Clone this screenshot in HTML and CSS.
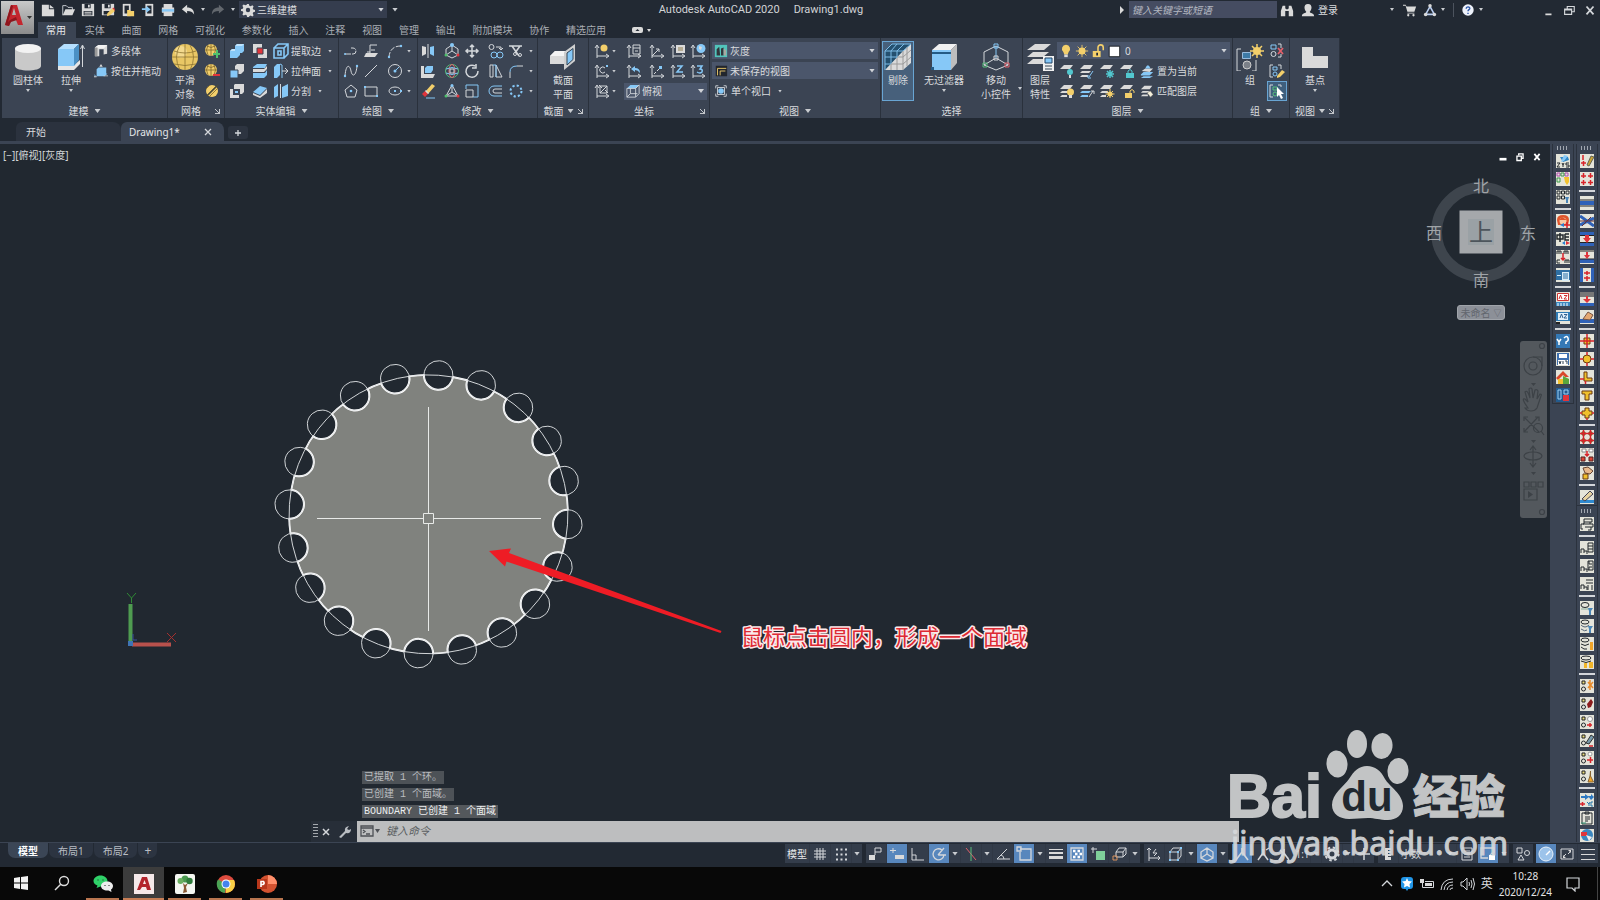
FILE: index.html
```html
<!DOCTYPE html>
<html lang="zh-CN">
<head>
<meta charset="utf-8">
<title>Autodesk AutoCAD 2020 - Drawing1.dwg</title>
<link rel="stylesheet" href="styles.css">
</head>
<body>
<header class="top">
  <button class="app" aria-label="应用程序菜单"><svg viewBox="0 0 32 32" width="32" height="32"><path d="M3 23L9 3h6l6 20h-5l-2-5H9l-2 6zM10 13h4l-2-7z" fill="#c4262e" fill-rule="evenodd"/><path d="M3 23l5-5 6-3 1 3-6 2-2 4zM9 3l2 1-5 16-3 3z" fill="#8e161d"/><path d="M25 14h5l-2.500 3z" fill="#333"/></svg></button>
  <div class="topcol">
    <div class="titlebar">
      <div class="qat">
        <button class="ib"><svg viewBox="0 0 16 16"><path class="w" d="M1 2h8v5h6v8H1zM10 2l5 4h-5z"/></svg></button>
        <button class="ib"><svg viewBox="0 0 16 16"><path class="sw" d="M2 14V3h4l2 2h5v3"/><path class="w" d="M2 14L5 7h11l-3 7z"/></svg></button>
        <button class="ib"><svg viewBox="0 0 16 16"><path class="w" d="M1 1h14v14H1z"/><path class="k" d="M4 1h7v5H4zM3 9h10v5H3z"/><path class="w" d="M8 2h2v3H8zM4 10h8v1H4zM4 12h8v1H4z"/></svg></button>
        <button class="ib"><svg viewBox="0 0 16 16"><path class="w" d="M1 1h14v13H1z"/><path class="k" d="M4 1h7v5H4zM3 9h7v4H3z"/><path class="w" d="M8 2h2v3H8z"/><path class="y" d="M7 12l6-6 3 3-6 5-3 1z"/><path class="r" d="M13 6l1-1 2 2v2z"/></svg></button>
        <button class="ib"><svg viewBox="0 0 16 16"><path class="w" d="M2 1h9v14H2z"/><path class="k" d="M4 3h5v9H4z"/><path class="y" d="M7 8h3l1 1h4v6H7z"/></svg></button>
        <button class="ib"><svg viewBox="0 0 16 16"><path class="w" d="M5 1h9v14H5z"/><path class="k" d="M7 3h5v9H7z"/><path class="b" d="M1 6h5V3l5 4.500L6 11V8H1z"/></svg></button>
        <button class="ib"><svg viewBox="0 0 16 16"><path class="w" d="M3 1h10v4H3zM1 5h14v6H1z"/><path class="b" d="M1 7h14v3H1z"/><path class="w" d="M3 10h10v5H3z"/></svg></button>
        <button class="ib"><svg viewBox="0 0 16 16"><path class="w" d="M1 7l6-5v3c5 0 8 3 8 8-2-3-4-4-8-4v3z"/></svg></button>
        <span class="car"></span>
        <button class="ib dim"><svg viewBox="0 0 16 16"><path class="w" d="M15 7L9 2v3c-5 0-8 3-8 8 2-3 4-4 8-4v3z"/></svg></button>
        <span class="car"></span>
        <div class="drop ws"><svg viewBox="0 0 16 16"><path class="w" fill-rule="evenodd" d="M7 1h2l.5 2 1.500.6 2-1 1.400 1.400-1 2 .6 1.500 2 .5v2l-2 .5-.6 1.500 1 2-1.400 1.400-2-1-1.500.6L9 16H7l-.5-2-1.500-.6-2 1-1.400-1.400 1-2L2 9.500 0 9V7l2-.5L2.600 5l-1-2L3 1.600l2 1L6.500 2zM8 5.500a2.500 2.500 0 100 5 2.500 2.500 0 000-5z"/></svg><select aria-label="工作空间"><option>三维建模</option></select></div>
        <span class="car big"></span>
      </div>
      <div class="title"><span>Autodesk AutoCAD 2020</span><span>Drawing1.dwg</span></div>
      <div class="info">
        <svg class="tri" viewBox="0 0 6 8"><path class="w" d="M1 0l4 4-4 4z"/></svg>
        <input class="search" type="text" placeholder="键入关键字或短语" aria-label="搜索">
        <button class="ib"><svg viewBox="0 0 16 16"><path class="w" d="M3 3h3v3l1 1h2l1-1V3h3l2 6v6h-5V9H6v6H1V9z"/></svg></button>
        <button class="login"><svg viewBox="0 0 16 16"><path class="w" d="M8 1c3 0 4 2 4 4s-1 4-2 5c0 2 5 1 5 5H1c0-4 5-3 5-5C5 9 4 7 4 5s1-4 4-4z"/></svg>登录</button>
        <span class="car far"></span>
        <button class="ib"><svg viewBox="0 0 16 16"><path class="w" d="M0 2h3l1 2h11l-2 6H5L3 3H0zM5 11h8v1H5z"/><circle class="w" cx="6" cy="14" r="1.300"/><circle class="w" cx="12" cy="14" r="1.300"/></svg></button>
        <button class="ib"><svg viewBox="0 0 16 16"><path d="M8 4l5 9H3z" fill="none" stroke="#b9cdf0" stroke-width="1.800"/><circle cx="8" cy="3" r="2" class="w"/><circle cx="3" cy="13" r="2" class="w"/><circle cx="13" cy="13" r="2" class="w"/></svg></button>
        <span class="car"></span><i class="vline"></i>
        <button class="ib"><svg viewBox="0 0 16 16"><circle cx="8" cy="8" r="6.500" fill="#eef2fb"/><path d="M6 6.500c0-3 4.500-2.500 4 0-.3 1.200-2 1.200-2 3M8 11v1.500" fill="none" stroke="#2c56a8" stroke-width="1.600"/></svg></button>
        <span class="car"></span>
        <div class="win">
          <button class="ib" aria-label="最小化"><svg viewBox="0 0 16 16"><path class="w" d="M5 12h7v2H5z"/></svg></button>
          <button class="ib" aria-label="还原"><svg viewBox="0 0 16 16"><path class="sw" stroke-width="1.300" d="M3 7h8v6H3zM6 7V4h8v6h-3M3 8h8"/></svg></button>
          <button class="ib" aria-label="关闭"><svg viewBox="0 0 16 16"><path class="sw" stroke-width="2" d="M4 4l8 9M12 4l-8 9"/></svg></button>
        </div>
      </div>
    </div>
    <div class="tabrow">
      <nav class="tabs">
        <a class="on" href="#">常用</a><a href="#">实体</a><a href="#">曲面</a><a href="#">网格</a><a href="#">可视化</a><a href="#">参数化</a><a href="#">插入</a><a href="#">注释</a><a href="#">视图</a><a href="#">管理</a><a href="#">输出</a><a href="#">附加模块</a><a href="#">协作</a><a href="#">精选应用</a>
      </nav>
      <button class="mini"><svg viewBox="0 0 20 8" width="20" height="8"><rect class="w" y="1" width="11" height="6" rx="2"/><path class="k" d="M3.500 5h4l-2-2z"/><path class="w" d="M15 3h4l-2 3z"/></svg></button>
    </div>
  </div>
</header>

<div class="ribbon">
  <section class="panel p1">
    <div class="body">
      <button class="bigb w44"><svg viewBox="0 0 28 28"><path fill="#c9c9c9" d="M1 5v18c0 6 26 6 26 0V5z"/><ellipse cx="14" cy="5.500" rx="13" ry="4.500" fill="#f2f2f2"/></svg><span>圆柱体</span><i class="car"></i></button>
      <button class="bigb w42"><svg viewBox="0 0 28 28"><path fill="#e6e6e6" d="M1 22h16l6-5v4l-6 6H1z"/><path class="b" d="M1 6h16v17H1z"/><path fill="#b5e0ff" d="M1 6l6-5h15l-5 5z"/><path fill="#4a90c4" d="M17 6l5-5v16l-5 6z"/><path class="sw" d="M25.500 24V3M23.500 6l2-4 2 4"/></svg><span>拉伸</span><i class="car"></i></button>
      <div class="stack">
        <button class="tb"><svg viewBox="0 0 16 16"><path class="w" d="M1 4l4-3h10v10l-4 1V6H6v8H1z"/><path fill="#f2f2f2" d="M1 4l4-3h10l-4 4H5z"/><path fill="#999" d="M1 4h3v10H1z"/></svg>多段体</button>
        <button class="tb"><svg viewBox="0 0 16 16"><path class="b" d="M3 6h9v8H3zM3 6l2-2h9l-2 2zM12 6l2-2v8l-2 2z"/><path class="w" d="M0 14h3v1H0zM11 13h5v1h-5zM8 0l2 3H6z"/><path class="sb" d="M2 14l-2-2M12 13l3-2"/></svg>按住并拖动</button>
      </div>
    </div>
    <footer>建模<i class="car big"></i></footer>
  </section>

  <section class="panel p2">
    <div class="body">
      <button class="bigb w34"><svg viewBox="0 0 28 28"><circle cx="14" cy="14" r="13" fill="#e9c765"/><circle cx="10" cy="9" r="6" fill="#f7e3a0" opacity=".7"/><path d="M1 14h26M14 1v26M3 8q11 4 22 0M9 2q-7 12 0 25M19 2q7 12 0 25M3 21q11 3 22 0" fill="none" stroke="#8d7430" stroke-width=".8"/></svg><span>平滑<br>对象</span></button>
      <div class="stack">
        <button class="ib"><svg viewBox="0 0 16 16"><circle class="y" cx="7" cy="7" r="6"/><path class="sk" d="M1 7h12M7 1v12M3 3q4 3 8 0M4 2q-3 5 0 10M10 2q3 5 0 10"/><path class="g" d="M9 10h3V7h2v3h2v2h-2v3h-2v-3H9z"/></svg></button>
        <button class="ib"><svg viewBox="0 0 16 16"><circle class="y" cx="7" cy="7" r="6"/><path class="sk" d="M1 7h12M7 1v12M3 3q4 3 8 0M4 2q-3 5 0 10M10 2q3 5 0 10"/><path class="r" d="M9 11h7v2H9z"/></svg></button>
        <button class="ib"><svg viewBox="0 0 16 16"><circle class="y" cx="8" cy="8" r="6"/><path class="sk" d="M3 12l9-9M5 14l9-9M2 6l4-4"/><path d="M14 2L3 13" stroke="#4a4a3a" stroke-width="1.500"/></svg></button>
      </div>
    </div>
    <footer>网格<i class="corner"></i></footer>
  </section>

  <section class="panel p3">
    <div class="body grid g3">
      <button class="ib"><svg viewBox="0 0 16 16"><path class="b" d="M6 3l2-2h7v7l-2 2h-2v2l-3 3H1V8l2-2h3z"/><path fill="#bfe3fd" d="M6 3l2-2h7l-2 2zM1 8l2-2h3v2z"/></svg></button>
      <button class="ib"><svg viewBox="0 0 16 16"><path class="w" d="M1 1h9v9H1zM6 6h9v9H6z"/><path class="r" stroke="#3b4453" d="M5 5h6v6H5z"/></svg></button>
      <button class="ib"><svg viewBox="0 0 16 16"><path class="sb" stroke-width="1.600" d="M1 5h10v10H1zM1 5l4-4h10v10l-4 4M11 5l4-4M5 8h3v4H5z"/></svg></button>
      <button class="tt">提取边<i class="car"></i></button>
      <button class="ib"><svg viewBox="0 0 16 16"><path class="w" d="M6 3l2-2h7v7l-3 3H6z"/><path class="b" stroke="#3b4453" d="M1 7h8v8H1z"/></svg></button>
      <button class="ib"><svg viewBox="0 0 16 16"><path class="b" d="M1 4l4-3h10l-2 4H1zM1 10h12l2-3v5l-3 3H1z"/><path class="w" d="M1 6h11l3-3v3l-3 3H1z"/></svg></button>
      <button class="ib"><svg viewBox="0 0 16 16"><path class="b" d="M1 4l3-3h3v11l-3 3H1z"/><path class="sb" d="M9 2v13M7 1l2 1"/><path class="sw" d="M9 8h6M12 5l3 3-3 3"/></svg></button>
      <button class="tt">拉伸面<i class="car"></i></button>
      <button class="ib"><svg viewBox="0 0 16 16"><path class="w" d="M5 2l1-1h9v8l-2 2H5zM1 6h9v9H1z"/><path class="b" stroke="#3b4453" stroke-width="2" d="M5 7h5v4H5z"/></svg></button>
      <button class="ib"><svg viewBox="0 0 16 16"><path class="b" d="M1 9l7-6 7 2-7 7z"/><path class="w" d="M1 10l7 3 7-7v4l-7 5-7-3z"/></svg></button>
      <button class="ib"><svg viewBox="0 0 16 16"><path class="b" d="M1 4l4-3v12l-4 2zM9 4l6-3v12l-6 2z"/><path class="sw" d="M7.500 1v14"/></svg></button>
      <button class="tt">分割<i class="car"></i></button>
    </div>
    <footer>实体编辑<i class="car big"></i></footer>
  </section>

  <section class="panel p4">
    <div class="body grid g4">
      <button class="ib"><svg viewBox="0 0 16 16"><path class="sw" d="M2 11h8a3 3 0 000-6H8" stroke-dasharray="6 1"/><circle class="b" cx="2" cy="11" r="1"/></svg></button>
      <button class="ib"><svg viewBox="0 0 16 16"><path class="sw" d="M4 9h3M7 10V2h7M8 7h4"/><path class="w" d="M3 10h12l-3 4H1z"/></svg></button>
      <button class="ib"><svg viewBox="0 0 16 16"><path class="sw" stroke-dasharray="5 1.500" d="M2 14Q3 3 14 3"/><circle class="b" cx="2" cy="14" r="1.200"/><circle class="b" cx="14" cy="3" r="1.200"/></svg></button><i class="car"></i>
      <button class="ib"><svg viewBox="0 0 16 16"><path class="sw" d="M2 13C3 0 7 2 8 8s5 6 6-5"/><circle class="b" cx="2" cy="13" r="1.200"/><circle class="b" cx="14" cy="3" r="1.200"/></svg></button>
      <button class="ib"><svg viewBox="0 0 16 16"><path class="sw" d="M2 14L14 2"/></svg></button>
      <button class="ib"><svg viewBox="0 0 16 16"><circle class="sw" cx="8" cy="8" r="6.500"/><path class="sb" d="M8 8l4-4"/><circle class="b" cx="8" cy="8" r="1.500"/></svg></button><i class="car"></i>
      <button class="ib"><svg viewBox="0 0 16 16"><path class="sw" d="M8 2l6 5-2 7H4L2 7z"/><circle class="b" cx="8" cy="8" r="1.300"/></svg></button>
      <button class="ib"><svg viewBox="0 0 16 16"><path class="sw" d="M2 4h12v9H2z"/><path class="b" d="M1 3h2v2H1zM13 12h2v2h-2z"/></svg></button>
      <button class="ib"><svg viewBox="0 0 16 16"><ellipse class="sw" cx="8" cy="8" rx="6" ry="4"/><path class="b" d="M7 7h2v2H7zM13 7h2v2h-2z"/></svg></button><i class="car"></i>
    </div>
    <footer>绘图<i class="car big"></i></footer>
  </section>

  <section class="panel p5">
    <div class="body grid g5">
      <button class="ib"><svg viewBox="0 0 16 16"><path class="w" d="M2 3l4 1v7l-4 2z"/><path class="b" d="M14 3l-4 1v7l4 2z"/><path class="sw" d="M8 1v14"/></svg></button>
      <button class="ib"><svg viewBox="0 0 16 16"><path class="sw" d="M8 2l6 4v6l-6 3-6-3V6zM8 8v-6M8 8l6 4M8 8l-6 4"/><circle class="b" cx="8" cy="2" r="2"/><circle class="r" cx="14" cy="12" r="1.500"/><circle class="g" cx="2" cy="12" r="1.500"/></svg></button>
      <button class="ib"><svg viewBox="0 0 16 16"><path class="sw" stroke-width="1.500" d="M8 2v12M2 8h12M6 4l2-2 2 2M6 12l2 2 2-2M4 6L2 8l2 2M12 6l2 2-2 2"/></svg></button>
      <button class="ib"><svg viewBox="0 0 16 16"><circle class="sw" cx="3.500" cy="4" r="2.500"/><path class="sw" d="M8 4h5v3M11 5l2 2 2-2"/><circle class="sb" cx="6" cy="12" r="3"/><circle class="sb" cx="12" cy="12" r="3"/></svg></button>
      <button class="ib"><svg viewBox="0 0 16 16"><path class="sw" stroke-width="1.500" d="M1 3h13M4 3l7 10M12 3L7 10"/><circle class="sw" cx="12" cy="12" r="1.500"/><circle class="sw" cx="7" cy="11" r="1.500"/></svg></button><i class="car"></i>
      <button class="ib"><svg viewBox="0 0 16 16"><path class="w" d="M1 3h3v8h11l-2 4H1z"/><path class="b" d="M5 5l2-2h6v4l-2 3H5z"/></svg></button>
      <button class="ib"><svg viewBox="0 0 16 16"><circle class="sg" cx="8" cy="8" r="6.500"/><ellipse class="sr" cx="8" cy="8" rx="3" ry="6.500"/><path class="sb" d="M2 6q6-3 12 0M2 10q6 3 12 0"/><path class="sw" d="M6 6h4v4H6z"/></svg></button>
      <button class="ib"><svg viewBox="0 0 16 16"><path class="sw" stroke-width="1.500" d="M11 3a6 6 0 103 5M12 1v4H8"/></svg></button>
      <button class="ib"><svg viewBox="0 0 16 16"><path class="sw" d="M5 14H2V2h3v12M8 14V2l6 12z"/><path class="sb" d="M5 2h3v12"/></svg></button>
      <button class="ib"><svg viewBox="0 0 16 16"><path class="sw" d="M2 15V9M9 3h6"/><path class="sb" d="M2 9q0-6 7-6"/></svg></button><i class="car"></i>
      <button class="ib"><svg viewBox="0 0 16 16"><path class="y" d="M5 9l7-8 3 2-7 8z"/><path class="r" d="M2 11l3-3 3 3-3 3z"/><path class="w" d="M5 8l1-1 3 3-1 1z"/><path class="sb" d="M6 15h9"/></svg></button>
      <button class="ib"><svg viewBox="0 0 16 16"><path class="sw" d="M8 2l6 11H2zM8 2v7l6 4M8 9l-6 4"/><circle class="b" cx="8" cy="2.500" r="1.500"/><circle class="r" cx="14" cy="13" r="1.500"/><circle class="g" cx="2" cy="13" r="1.500"/></svg></button>
      <button class="ib"><svg viewBox="0 0 16 16"><path class="sb" d="M2 6V2h12v12h-5"/><path class="sw" d="M2 7h7v7H2z"/></svg></button>
      <button class="ib"><svg viewBox="0 0 16 16"><path class="sb" d="M14 3H6a5 5 0 000 10h8"/><path class="sw" d="M14 6H7a2 2 0 000 4h7"/></svg></button>
      <button class="ib"><svg viewBox="0 0 16 16"><circle cx="8" cy="8" r="5.500" fill="none" stroke="#86c8f7" stroke-width="2" stroke-dasharray="2.200 2.120"/></svg></button><i class="car"></i>
    </div>
    <footer>修改<i class="car big"></i></footer>
  </section>

  <section class="panel p6">
    <div class="body">
      <button class="bigb w50"><svg viewBox="0 0 28 28"><path class="w" d="M1 13l5-5h14l-4 5v8H1z"/><path fill="#f4f4f4" d="M1 13l5-5h14l-5 5z"/><path fill="#cfcfcf" d="M15 9l11-8v17l-11 9z"/><path class="b" stroke="#345" d="M18 10l6-4.500v11L18 22z"/></svg><span>截面<br>平面</span></button>
    </div>
    <footer>截面<i class="car big"></i><i class="corner"></i></footer>
  </section>

  <section class="panel p7">
    <div class="body grid g7">
      <button class="ib"><svg viewBox="0 0 16 16"><path class="sw" d="M3 15V3M1 5l2-3 2 3M3 13h11M12 11l3 2-3 2"/><circle class="y" cx="10" cy="5" r="3.500"/></svg></button><i class="car"></i>
      <button class="ib"><svg viewBox="0 0 16 16"><path class="sw" d="M3 15V3M1 5l2-3 2 3M3 13h11M12 11l3 2-3 2M7 2h7v9H7zM7 5h7M9 8h3"/></svg></button>
      <button class="ib"><svg viewBox="0 0 16 16"><path class="sw" d="M3 15V3M1 5l2-3 2 3M3 13h11M12 11l3 2-3 2M3 13l7-7M7 6h3v3"/></svg></button>
      <button class="ib"><svg viewBox="0 0 16 16"><path class="sw" d="M3 15V3M1 5l2-3 2 3M3 13h11M12 11l3 2-3 2"/><path class="w" d="M6 2h9v8H6z"/><path class="sk" d="M8 5h5M8 7h5"/></svg></button>
      <button class="ib"><svg viewBox="0 0 16 16"><path class="sw" d="M3 15V3M1 5l2-3 2 3M3 13h11M12 11l3 2-3 2"/><circle class="b" cx="11" cy="5.500" r="4.500"/><path class="w" d="M9 3l3 1-1 3-2-1z"/></svg></button>
      <button class="ib"><svg viewBox="0 0 16 16"><path class="sw" d="M3 15V3M1 5l2-3 2 3M3 13h11M12 11l3 2-3 2M11 5a3 3 0 100 4"/><path class="sb" d="M12 2l2 2M14 2l-2 2"/></svg></button><i class="car"></i>
      <button class="ib"><svg viewBox="0 0 16 16"><path class="sw" d="M3 15V3M1 5l2-3 2 3M3 13h11M12 11l3 2-3 2"/><path class="b" d="M5 6l4-3v2q5 0 5 5-2-3-5-3v2z"/></svg></button>
      <button class="ib"><svg viewBox="0 0 16 16"><path class="sw" d="M3 15V3M1 5l2-3 2 3M3 13h11M12 11l3 2-3 2M5 11l2-2M8 8l2-2"/><path class="b" d="M10 3h3v3h-3z"/></svg></button>
      <button class="ib"><svg viewBox="0 0 16 16"><path class="sw" d="M3 15V3M1 5l2-3 2 3M3 13h11M12 11l3 2-3 2"/><path class="sb" stroke-width="1.500" d="M7 3h5L7 9h6"/></svg></button>
      <button class="ib"><svg viewBox="0 0 16 16"><path class="sw" d="M3 15V3M1 5l2-3 2 3M3 13h11M12 11l3 2-3 2"/><path class="sb" stroke-width="1.500" d="M7 3h5L10 6q3 0 2 3-2 2-5 0"/></svg></button>
      <button class="ib"><svg viewBox="0 0 16 16"><path class="sw" d="M3 15V3M1 5l2-3 2 3M3 13h11M12 11l3 2-3 2M6 3h7v7H6zM6 10l7-7M5 2l3 3M14 10l-3-3"/></svg></button><i class="car"></i>
      <div class="drop span4"><svg viewBox="0 0 16 16"><path class="b" d="M1 5l4-4h10l-4 4z"/><path class="sw" d="M1 5h10v10H1zM11 5l4-4v10l-4 4M5 5v6l-4 4M5 11h8"/></svg><select aria-label="视图方向"><option>俯视</option></select></div>
    </div>
    <footer>坐标<i class="corner"></i></footer>
  </section>

  <section class="panel p8">
    <div class="body stack wide">
      <div class="drop"><svg viewBox="0 0 16 16"><path fill="#51c4bb" d="M1 1h14v14H1z"/><path fill="#32363c" d="M3 6l3-3 1 10H3zM8 5l3-1v9H8z"/><path fill="#a8a8a0" d="M11 5l3 2v6h-3z"/></svg><select aria-label="视觉样式"><option>灰度</option></select></div>
      <div class="drop"><svg viewBox="0 0 16 16"><path fill="#22262d" d="M2 2h13v12H2z"/><path class="sy" d="M4 13V5h10M7 13V8h6"/></svg><select aria-label="视图"><option>未保存的视图</option></select></div>
      <button class="tb"><svg viewBox="0 0 16 16"><path class="sw" d="M2 5V2h3M11 2h3v3M14 11v3h-3M5 14H2v-3M4 4h8v8H4z"/><circle class="b" cx="8" cy="8" r="3.200"/></svg>单个视口<i class="car"></i></button>
    </div>
    <footer>视图<i class="car big"></i></footer>
  </section>

  <section class="panel p9">
    <div class="body">
      <button class="bigb sel w32"><svg viewBox="0 0 28 28"><path fill="#24506f" d="M1 8l7-7h19v19l-8 7H1z"/><path class="w" d="M1 27L19 8v19zM19 8l8-7v19l-8 7z"/><path fill="none" stroke="#7dbbe6" d="M1 27V8h18M1 8l7-7h19l-8 7M7 8l6-7M13 8l7-7M7 8v13M13 8v7M1 14h12M1 21h6"/><path fill="none" stroke="#9a9a9a" d="M13 15v12M7 21v6M13 14h6l8-7M7 21h12l8-7M23 4v19M19 8v19"/></svg><span>剔除</span></button>
      <button class="bigb w60"><svg viewBox="0 0 28 28"><path fill="#f1f1f1" d="M2 7l7-6h18l-6 6z"/><path fill="#bdbdbd" d="M21 7l6-6v19l-6 7z"/><path class="b" d="M2 7h19v20H2z"/><path fill="#245b85" d="M2 9h19v2H2zM1 24h3v3H1z"/></svg><span>无过滤器</span><i class="car"></i></button>
      <button class="bigb w44"><svg viewBox="0 0 28 28"><path class="sw" d="M14 3l12 6v13l-12 5-12-5V9zM14 15l12 7M14 15L2 22"/><path class="sb" d="M14 3v12M12 1h4v4h-4z"/><path class="sg" d="M1 20h4v4H1z"/><path class="sr" d="M23 20h4v4h-4z"/><path class="sw" d="M12 13h4v4h-4z"/></svg><span>移动<br>小控件</span></button><i class="car low"></i>
    </div>
    <footer>选择</footer>
  </section>

  <section class="panel p10">
    <div class="body">
      <button class="bigb w34"><svg viewBox="0 0 28 28"><path class="w" d="M1 7l8-6h16l-7 6zM1 14l6-5h16l-6 5zM1 21l6-5h10v5z"/><path fill="#f1f1f1" d="M17 13h11v15H17z"/><path class="b" stroke="#246" d="M19 15h7v5h-7z"/><path stroke="#345" d="M19 23h7M19 26h7"/></svg><span>图层<br>特性</span></button>
      <div class="stack wide">
        <div class="drop lay"><svg viewBox="0 0 16 16"><path class="y" d="M8 1a4.500 4.500 0 013 8l-1 3H6l-1-3a4.500 4.500 0 013-8z"/><path class="w" d="M6 12h4v3H6z"/></svg><svg viewBox="0 0 16 16"><circle class="y" cx="8" cy="8" r="4"/><path class="sy" d="M8 1v14M1 8h14M3 3l10 10M13 3L3 13"/></svg><svg viewBox="0 0 16 16"><path class="y" d="M2 8h9v7H2z"/><path class="sy" stroke-width="1.800" d="M8 8V4a3 3 0 016 0v3"/><path class="k" d="M6 10h2v3H6z"/></svg><svg viewBox="0 0 16 16"><path fill="#fff" stroke="#14181d" d="M2.500 2.500h12v12h-12z"/></svg><select aria-label="图层"><option>0</option></select></div>
        <div class="row">
          <button class="ib"><svg viewBox="0 0 16 16"><path class="w" d="M1 6l4-4h9l-3 4z"/><circle cx="11" cy="9" r="3" fill="#52c7cf"/><path class="w" d="M10 12h2v3h-2z"/></svg></button>
          <button class="ib"><svg viewBox="0 0 16 16"><path class="w" d="M1 6l4-4h9l-3 4zM1 10l2-2h9l-2 2zM1 14l2-2h6v2z"/><path class="sb" d="M14 8l-4 6M9 12v3h3"/></svg></button>
          <button class="ib"><svg viewBox="0 0 16 16"><path class="w" d="M1 6l4-4h9l-3 4z"/><path d="M11 7v8M7 11h8M8 8l6 6M14 8l-6 6" stroke="#52c7cf" stroke-width="1.500"/></svg></button>
          <button class="ib"><svg viewBox="0 0 16 16"><path class="w" d="M1 6l4-4h9l-3 4z"/><path d="M7 10h8v5H7z" fill="#52c7cf"/><path d="M9 10V8q2-3 4 0v2" fill="none" stroke="#52c7cf"/></svg></button>
          <button class="tb n"><svg viewBox="0 0 16 16"><path class="b" d="M1 12l3-3h11l-4 4H1zM1 16l3-2h11l-4 2z"/><path class="w" d="M2 8l4-3h9l-4 4z"/><path class="b" d="M6 5q3-7 6 0z"/></svg>置为当前</button>
        </div>
        <div class="row">
          <button class="ib"><svg viewBox="0 0 16 16"><path class="w" d="M1 6l4-4h9l-3 4zM1 10l2-2h6v2zM1 14l2-2h5v2z"/><circle cx="11.500" cy="9" r="3.500" class="y"/><path class="w" d="M10 12h3v3h-3z"/></svg></button>
          <button class="ib"><svg viewBox="0 0 16 16"><path class="w" d="M1 6l4-4h9l-3 4z"/><path class="b" d="M1 10l2-2h9l-2 2zM1 14l2-2h6v2z"/><path class="sw" d="M14 8l-4 6M12 8h3v3"/></svg></button>
          <button class="ib"><svg viewBox="0 0 16 16"><path class="w" d="M1 6l4-4h9l-3 4zM1 10l2-2h6v2zM1 14l2-2h4v2z"/><path class="sy" d="M11 6v9M6.500 11h9M8 8l6 6M14 8l-6 6"/><circle class="y" cx="11" cy="11" r="2.500"/></svg></button>
          <button class="ib"><svg viewBox="0 0 16 16"><path class="w" d="M1 6l4-4h9l-3 4z"/><path class="y" d="M6 10h7v5H6z"/><path class="sy" d="M11 10V8q2-3 4 0v2"/></svg></button>
          <button class="tb n"><svg viewBox="0 0 16 16"><path class="w" d="M1 6l4-4h9l-3 4zM1 10l2-2h9l-2 2zM1 14l2-2h6v2z"/><path fill="#f5f0dc" stroke="#555" stroke-width=".5" d="M8 10l4-2 3 4-3 3z"/></svg>匹配图层</button>
        </div>
      </div>
    </div>
    <footer>图层<i class="car big"></i></footer>
  </section>

  <section class="panel p11">
    <div class="body">
      <button class="bigb w34"><svg viewBox="0 0 28 28"><path class="sw" d="M5 6H1v22h4M16 28h4V17"/><path fill="#3e7aa6" stroke="#9bd" d="M6.500 9.500h8v6h-8z"/><circle cx="11" cy="22" r="4" fill="#7b8088" stroke="#ccc"/><path d="M21 1v14M14 8h14M16 3l10 10M26 3L16 13" stroke="#f3cf6b" stroke-width="1.500"/><circle class="y" cx="21" cy="8" r="4"/></svg><span>组</span></button>
      <div class="stack">
        <button class="ib"><svg viewBox="0 0 16 16"><path class="sb" d="M2 2h5v4H2z"/><circle class="sw" cx="4.500" cy="11" r="2.500"/><path class="sw" d="M9 1h3v4M9 14h3v-3"/><path class="sr" stroke-width="1.800" d="M9 5l5 6M14 5l-5 6"/></svg></button>
        <button class="ib"><svg viewBox="0 0 16 16"><path class="sw" d="M4 2H1v12h3M9 2h3v4"/><path class="sb" d="M4 4h4v3H4z"/><circle class="sb" cx="6" cy="11" r="2"/><path class="y" d="M8 13l5-6 3 2-5 5-3 1z"/></svg></button>
        <button class="ib on"><svg viewBox="0 0 16 16"><path class="sw" d="M4 2H1v12h3M9 2h3v2"/><path class="sg" d="M4 4h4v3H4z"/><circle class="sg" cx="6" cy="11" r="2"/><path fill="#fff" d="M8 4l7 7h-3l2 4-2 1-2-4-2 2z"/></svg></button>
      </div>
    </div>
    <footer>组<i class="car big"></i></footer>
  </section>

  <section class="panel p12">
    <div class="body">
      <button class="bigb w50"><svg viewBox="0 0 28 28"><path class="w" d="M1 4h11v9h15v12H1z"/></svg><span>基点</span><i class="car"></i></button>
    </div>
    <footer>视图<i class="car big"></i><i class="corner"></i></footer>
  </section>
</div>

<div class="files">
  <button class="ftab">开始</button>
  <button class="ftab on"><span>Drawing1*</span><svg viewBox="0 0 8 8" width="8" height="8"><path class="sw" stroke-width="1.300" d="M1 1l6 6M7 1L1 7"/></svg></button>
  <button class="fplus" aria-label="新图形"><svg viewBox="0 0 8 8" width="8" height="8"><path class="sw" stroke-width="1.300" d="M4 1v6M1 4h6"/></svg></button>
</div>

<div class="work">
  <main class="canvas">
    <div class="vlabel">[−][俯视][灰度]</div>
    <svg class="drawing" width="1100" height="640" viewBox="0 0 1100 640">
      <defs>
        <clipPath id="disc"><circle r="140"/></clipPath>
        <g id="ring">
          <circle cx="0" cy="-139.400" r="14.500"/><circle cx="43.100" cy="-132.600" r="14.500"/><circle cx="81.900" cy="-112.800" r="14.500"/><circle cx="112.800" cy="-81.900" r="14.500"/><circle cx="132.600" cy="-43.100" r="14.500"/>
          <circle cx="139.400" cy="0" r="14.500"/><circle cx="132.600" cy="43.100" r="14.500"/><circle cx="112.800" cy="81.900" r="14.500"/><circle cx="81.900" cy="112.800" r="14.500"/><circle cx="43.100" cy="132.600" r="14.500"/>
          <circle cx="0" cy="139.400" r="14.500"/><circle cx="-43.100" cy="132.600" r="14.500"/><circle cx="-81.900" cy="112.800" r="14.500"/><circle cx="-112.800" cy="81.900" r="14.500"/><circle cx="-132.600" cy="43.100" r="14.500"/>
          <circle cx="-139.400" cy="0" r="14.500"/><circle cx="-132.600" cy="-43.100" r="14.500"/><circle cx="-112.800" cy="-81.900" r="14.500"/><circle cx="-81.900" cy="-112.800" r="14.500"/><circle cx="-43.100" cy="-132.600" r="14.500"/>
        </g>
      </defs>
      <g transform="translate(428.500 370.300) rotate(4.100)">
        <circle r="139.400" fill="#80827e" stroke="#fff" stroke-width="1.800"/>
        <use href="#ring" fill="#212830" stroke="none"/>
        <g clip-path="url(#disc)"><use href="#ring" fill="#212830" stroke="#fff" stroke-width="2"/></g>
        <circle r="139.400" fill="none" stroke="#dfe2e4" stroke-width=".9"/>
        <use href="#ring" fill="none" stroke="#dfe2e4" stroke-width=".9"/>
      </g>
      <path d="M428.500 263v106M428.500 380v107M317 374.500h106M434 374.500h107M423.500 369.500h10v10h-10z" fill="none" stroke="#e8eae8"/>
      <path d="M489 407l22-2.500-2 4.500 212.500 78-1 2-214-71.500-1.500 5z" fill="#ee1c25"/>
      <text class="note" x="741" y="501">鼠标点击圆内，形成一个面域</text>
      <path d="M128.500 460h4v41h-4z" fill="#4f9c50"/><path d="M132 498.500h39v4h-39z" fill="#b8514c"/>
      <path d="M127 449l4.500 5 4.500-5M131.500 454v5" fill="none" stroke="#2f8a35"/><path d="M167 489l9 9M176 489l-9 9" fill="none" stroke="#a5302f"/><path d="M128 497h5v5h-5z" fill="#3f74b5"/><path d="M133 490v6h4" fill="none" stroke="#3a4f9c"/>
    </svg>
    <div class="mdi">
      <button class="ib"><svg viewBox="0 0 16 16"><path fill="#fff" d="M4 9h8v3H4z"/></svg></button><button class="ib"><svg viewBox="0 0 16 16"><path fill="none" stroke="#fff" stroke-width="1.500" d="M4.500 7h5v5h-5zM6.500 6V4.500h5v5H10"/></svg></button><button class="ib"><svg viewBox="0 0 16 16"><path stroke="#fff" stroke-width="2" d="M5 4.500l6 7M11 4.500l-6 7"/></svg></button>
    </div>
    <div class="cube">
      <svg viewBox="0 0 114 124" width="114" height="124"><circle cx="57" cy="62" r="44.500" fill="none" stroke="#3e454d" stroke-width="11"/><path fill="#a5a8ab" d="M35.500 40.500h43v43h-43z"/><path fill="#9aa1a5" d="M44 49h26v26H44z"/>
        <g class="dir"><text x="57" y="22">北</text><text x="57" y="116">南</text><text x="10" y="69">西</text><text x="104" y="69">东</text></g><text class="up" x="57" y="71">上</text></svg>
      <button class="pill">未命名 <span>▽</span></button>
    </div>
    <div class="navbar">
      <svg viewBox="0 0 27 177" width="27" height="177"><g fill="none" stroke="#3d4247" stroke-width="1.200"><circle cx="22" cy="5" r="2.500"/><circle cx="13" cy="25" r="9"/><circle cx="13" cy="25" r="4"/><path d="M13 16h9v9M8 67c-5-7-6-10-3-9l3 3-3-10c2-2 3 0 5 6l-1-9q2-2 3 0l1 9 2-8q2-1 3 1l-1 8 3-5q2 0 1 2l-4 12q-2 3-6 3t-6-3zM5 77l14 14M18 76L4 91M4 80v-4h4M15 76h4v4M4 87v4h4"/><circle cx="18" cy="87" r="4.500"/><path d="M21 90l3 4M13 105v21M10 109l3-4 3 4M10 122l3 4 3-4"/><ellipse cx="13" cy="115" rx="9" ry="4"/><path d="M4 141h5v5H4zM11 141h5v5h-5zM18 141h5v5h-5zM4 148h13v11H4z"/><circle cx="22" cy="171" r="2.500"/></g><path fill="#3d4247" d="M8 150l5 3.500-5 3.500zM11 42h5l-2.500 3zM11 99h5l-2.500 3zM11 131h5l-2.500 3z"/></svg>
    </div>
    <div class="cmd">
      <div class="hist"><span class="old">已提取 1 个环。</span><span class="old">已创建 1 个面域。</span><span>BOUNDARY 已创建 1 个面域</span></div>
      <div class="cmdrow">
        <div class="cmdtools"><i class="dots"></i><button aria-label="关闭"><svg viewBox="0 0 10 10" width="10" height="10"><path class="sw" stroke-width="1.500" d="M2 2l6 6M8 2L2 8"/></svg></button><button aria-label="自定义"><svg viewBox="0 0 14 14" width="14" height="14"><path fill="#b9bdc2" d="M1 12l6-6q-1-4 4-5l-2 3 2 1 2-1q0 5-5 4l-5 5z"/></svg></button></div>
        <label class="cmdin"><svg viewBox="0 0 20 12" width="20" height="12"><path fill="none" stroke="#4d5055" stroke-width="1.300" d="M1 1h12v10H1zM1 3h12M3 5l2 1.500L3 8M6 9h4"/><path fill="#4d5055" d="M15 4h5l-2.500 4z"/></svg><input type="text" placeholder="键入命令" aria-label="命令行"></label>
      </div>
    </div>
  </main>

  <aside class="docks">
    <div class="dcol">
      <div class="dock">
        <i class="grip"></i>
        <button><svg viewBox="0 0 14 14"><path fill="#2f86c4" d="M4 3h8l1 3-6 2z"/><path class="sk2" d="M1 9h3l-3 4h3M6 9l1 2 1-2M7 11v2M13 9h-3v2h3v2h-3"/><path class="b" d="M8 1l4 1-4 5-3 1z"/></svg></button>
        <button><svg viewBox="0 0 14 14"><path stroke="#b04bb0" fill="none" d="M1 1h3v3H1zM9 1h3v3H9z"/><path stroke="#3a9a4a" fill="none" d="M5 1h3v3H5zM1 6h3v4H1z"/><path fill="#f2c12e" d="M8 5h5v5l-2 3-2-3z"/></svg></button>
        <button><svg viewBox="0 0 14 14"><path class="sk2" d="M1 1h3v3H1zM5.500 1h3v3h-3zM10 1h3v3h-3zM1 6h3v3H1zM5.500 6h3v3h-3z"/><path fill="#4a86b8" d="M9 7h4l-1 3v3h-2v-3z"/></svg></button>
        <i class="sep"></i>
        <button><svg viewBox="0 0 14 14"><path fill="#e0542b" d="M1 6q0-5 6-5t6 5l-1 5H2z"/><circle cx="7" cy="7" r="3.500" fill="#f6c9a4"/><path fill="#e0542b" d="M3 6l3-3 5 3z"/><path class="tr" d="M8 11h6M11 8v6"/><path fill="#2a7fd0" d="M4 11l4-2v4z"/></svg></button>
        <button><svg viewBox="0 0 14 14"><path class="sk2" stroke-width="1.500" d="M1 3h6v4H1zM4 1v9M9 2h4M9 5h4M9 2v6h4"/><path fill="#2a7fd0" d="M6 11l3-2v4z"/><path class="r" d="M14 11l-4-2v4z"/></svg></button>
        <button><svg viewBox="0 0 14 14"><path class="sk2" d="M1 4V1h4v3M3 1v3M8 4V1h4v3M10 1v3M4 10H1v3h3M9 13v-3h4v3M11 10v3"/><path class="tr" d="M7 3v7M5 8l2 2 2-2"/></svg></button>
        <button><svg viewBox="0 0 14 14"><path fill="#2d6ea4" d="M0 2h14v10H0z"/><path fill="#d8ecf8" d="M6 4h7v9H6zM1 7h4v1H1z"/><path stroke="#2d6ea4" d="M7 6h5M7 8h5M7 10h5"/></svg></button>
        <i class="sep"></i>
        <button><svg viewBox="0 0 14 14"><path fill="#fff" stroke="#c33" d="M1.500 1.500h11v7h-11z"/><path stroke="#c33" fill="none" d="M3 7l1.500-4L6 7M8 3.500h3L8 7h3"/><path fill="#3b87c0" d="M0 10h14v4H0z"/><path stroke="#fff" d="M2 11v3M5 11v3M8 11v3M11 11v3"/></svg></button>
        <button><svg viewBox="0 0 14 14"><path fill="#2f7cb6" d="M0 2h14v9H0z"/><path fill="#dff0fb" d="M2 3h10v7H2z"/><path stroke="#2f6090" fill="none" d="M4 8l1.500-4L7 8M8 4.500h3L8 8h3"/><path fill="#222" d="M0 12h4v2H0z"/></svg></button>
        <i class="sep"></i>
        <button><svg viewBox="0 0 14 14"><path fill="#3478b5" d="M0 0h14v14H0z"/><path stroke="#fff" stroke-width="1.500" fill="none" d="M1 5l2 3 2-3M3 8v3M8 4q3-3 4 0t-2 4v2"/></svg></button>
        <button><svg viewBox="0 0 14 14"><path fill="#3d6fb0" d="M1 1h12v12H1z"/><path fill="#fff" d="M3 2h8v4H3zM2 8h10v5H2z"/><path stroke="#345" fill="none" d="M3 9l1 3 1-3M7 9v3M9 9h2v3"/></svg></button>
        <button><svg viewBox="0 0 14 14"><path fill="#d9472b" d="M0 8l7-7 6 6H9l-2-2-5 5z"/><path fill="#5aa63c" d="M7 6l6 3v5H7z"/><path fill="#f2c12e" d="M2 9h5v5H2z"/></svg></button>
        <button><svg viewBox="0 0 14 14"><path fill="#235b8f" d="M0 0h14v14H0z"/><path stroke="#9cd0f5" fill="none" d="M2 2h3v9H2zM8 2h4v4H8z"/><path class="r" d="M7 7h6v6H7z"/></svg></button>
      </div>
    </div>
    <div class="dcol">
      <div class="dock">
        <i class="grip"></i>
        <button><svg viewBox="0 0 14 14"><path class="tr" d="M3 1v5M1 9h5M3.500 7v5"/><path fill="#c9a437" stroke="#665" d="M7 11l4-9 3 1-5 9z"/></svg></button>
        <button><svg viewBox="0 0 14 14"><path class="tr" stroke-width="1" d="M1 4h5M3.500 1v5M8 4h5M10.500 1v5M1 10.500h5M3.500 8v5M8 10.500h5M10.500 8v5"/></svg></button>
        <i class="sep"></i>
        <button><svg viewBox="0 0 14 14"><path fill="#2f62b8" d="M0 5h14v4H0z"/><path stroke="#222" d="M0 4h14M0 10h14"/></svg></button>
        <button><svg viewBox="0 0 14 14"><path stroke="#2f62b8" stroke-width="3" d="M0 2l14 10M0 11l14-7"/><path stroke="#633" d="M0 7h14M2 12l9-9"/></svg></button>
        <button><svg viewBox="0 0 14 14"><path fill="#2f62b8" d="M0 0h14v3H0zM0 11h14v3H0z"/><path stroke="#222" d="M0 3.500h14M0 10.500h14"/><path class="r" d="M5 3h4v3h2l-4 5-4-5h2z"/></svg></button>
        <button><svg viewBox="0 0 14 14"><path fill="#2f62b8" d="M0 9h14v4H0z"/><path stroke="#222" d="M0 1h14M0 9h14"/><path class="r" d="M6 2h2v3h2L7 9 4 5h2z"/></svg></button>
        <button><svg viewBox="0 0 14 14"><path fill="#2f62b8" d="M0 0h3v14H0zM11 0h3v14h-3z"/><path class="tr" d="M4 5h6M4 10h6M7 3v4M7 8v5"/></svg></button>
        <i class="sep"></i>
        <button><svg viewBox="0 0 14 14"><path fill="#777" d="M0 0h14v5H0z"/><path fill="#2f62b8" d="M0 11h14v3H0z"/><path class="r" d="M6 4h2v3h3l-4 4-4-4h3z"/></svg></button>
        <button><svg viewBox="0 0 14 14"><path fill="#2f62b8" d="M0 9h14v4H0z"/><path fill="#e5a871" stroke="#754" d="M3 9l5-7 5 3-3 5z"/></svg></button>
        <i class="sep"></i>
        <button><svg viewBox="0 0 14 14"><path class="yb" d="M4 4h6v6H4z"/><path class="tr" stroke-width="1" d="M0 7h14M7 0v14"/></svg></button>
        <button><svg viewBox="0 0 14 14"><circle class="yb" cx="7" cy="7" r="4"/><path class="tr" stroke-width="1" d="M0 7h3M11 7h3M7 0v3M7 11v3"/></svg></button>
        <button><svg viewBox="0 0 14 14"><path class="yb" d="M4 2h3v6h5v3H4z"/><path class="tr" stroke-width="1" d="M0 9h4M5.500 11v3"/></svg></button>
        <button><svg viewBox="0 0 14 14"><path class="yb" d="M2 3h10v3H9v6H5V6H2z"/></svg></button>
        <button><svg viewBox="0 0 14 14"><path class="yb" d="M5 2h4v3h3v4H9v3H5V9H2V5h3z"/><path class="tr" stroke-width="1" d="M0 7h2M12 7h2M7 12v2"/></svg></button>
        <i class="sep"></i>
        <button><svg viewBox="0 0 14 14"><path class="yb" d="M2 2h3v3H2zM9 2h3v3H9zM2 9h3v3H2zM9 9h3v3H9z"/><path class="tr" stroke-width="1" d="M0 3.500h14M0 10.500h14M3.500 0v14M10.500 0v14"/></svg></button>
        <button><svg viewBox="0 0 14 14"><path fill="#fff" stroke="#888" d="M2 1h4v3H2zM9 1h4v3H9z"/><path class="tr" d="M7 3v5M5 6l2 2 2-2"/><path fill="#d43" stroke="#522" d="M1 9h4v4H1zM9 9h4v4H9z"/></svg></button>
        <button><svg viewBox="0 0 14 14"><path fill="#e9b98c" stroke="#643" d="M3 2l5-1 5 4-3 3-5-1z"/><path class="yb" d="M3 8h5v5H3z"/></svg></button>
        <i class="sep"></i>
        <button><svg viewBox="0 0 14 14"><path fill="#2f8ad0" d="M0 10h14v3H0z"/><path fill="#e6d2a0" stroke="#445" d="M2 9l8-8 3 3-8 7z"/></svg></button>
      </div>
      <div class="dock cut">
        <i class="grip"></i>
        <button><svg viewBox="0 0 14 14"><path class="sk2" d="M4 2h8v3H4zM3 7h10v3H5M4 5v2H1v5h2M10 5v2M11 10v3h-3"/></svg></button>
        <i class="sep"></i>
        <button><svg viewBox="0 0 14 14"><path class="sk2" d="M1 12V8h3v4M4 10h3v3M8 2h5v9H8zM8 5h5M8 8h5"/></svg></button>
        <button><svg viewBox="0 0 14 14"><path class="sk2" d="M1 12V8h3v4M4 10h3v3M8 2h5v9H8zM9 2v3h3M9 11V8h3"/></svg></button>
        <button><svg viewBox="0 0 14 14"><path class="sk2" d="M1 12V8h3v4M4 10h3v3M6 3h7M6 6h7M8 8v5M12 8v5"/></svg></button>
        <i class="sep"></i>
        <button><svg viewBox="0 0 14 14"><ellipse class="sk2" cx="5" cy="4" rx="4" ry="2.500"/><path stroke="#8a9" fill="none" d="M1 8h8"/><path fill="#4a86b8" d="M8 7h5l-2 3v4H9v-4z"/></svg></button>
        <button><svg viewBox="0 0 14 14"><ellipse class="sk2" cx="5" cy="3" rx="4" ry="2"/><path stroke="#567" fill="none" d="M1 6q4 4 8 0M1 10q4 3 6 1"/><path fill="#4a86b8" d="M8 7h5l-2 3v4H9v-4z"/></svg></button>
        <button><svg viewBox="0 0 14 14"><ellipse class="sk2" cx="5" cy="3" rx="4" ry="2"/><path class="sk2" d="M1 7q4 3 8 0M1 10q3 3 6 2"/><path fill="#f0a52a" d="M10 5h3v8h-3z"/></svg></button>
        <button><svg viewBox="0 0 14 14"><ellipse class="sk2" cx="6" cy="3" rx="5" ry="2"/><path class="sk2" d="M1 6q5 3 10 0"/><path fill="#f0b52a" d="M4 8h3v5H4zM9 7h4v6H9z"/></svg></button>
        <i class="sep"></i>
        <button><svg viewBox="0 0 14 14"><path class="yk" d="M2 2h3v3H2z"/><circle class="sk2" cx="3.500" cy="10" r="2"/><path stroke="#e88a2a" stroke-width="1.500" d="M8 3l5 6M13 3L8 9M10 1v10"/></svg></button>
        <button><svg viewBox="0 0 14 14"><path class="yk" d="M2 2h3v3H2z"/><circle class="sk2" cx="3.500" cy="10" r="2"/><path fill="#8c1d1d" d="M7 7l4-5 2 3-2 5-3 1z"/></svg></button>
        <button><svg viewBox="0 0 14 14"><path class="yk" d="M2 2h3v3H2z"/><circle class="sk2" cx="3.500" cy="10" r="2"/><circle cx="10" cy="4" r="2.500" fill="#fff" stroke="#999"/><path class="tr" d="M7 10h5M10 8v4"/></svg></button>
        <button><svg viewBox="0 0 14 14"><path class="yk" d="M2 2h3v3H2z"/><circle class="sk2" cx="3.500" cy="10" r="2"/><path fill="#79a" stroke="#333" d="M6 10l5-8 3 2-5 7z"/><path class="tr" d="M9 13h4"/></svg></button>
        <button><svg viewBox="0 0 14 14"><path class="yk" d="M2 2h3v3H2z"/><circle class="sk2" cx="3.500" cy="10" r="2"/><circle cx="10" cy="3" r="2" fill="#fff" stroke="#999"/><path class="tr" d="M7 9h6M10.500 6v6"/></svg></button>
        <button><svg viewBox="0 0 14 14"><path class="yk" d="M2 2h3v3H2z"/><circle class="sk2" cx="3.500" cy="10" r="2"/><path fill="#f0a52a" stroke="#863" d="M10.500 2v5l3 6H8l2-6z"/></svg></button>
        <i class="sep"></i>
        <button><svg viewBox="0 0 14 14"><path fill="#2b78c2" d="M1 3h4V1l4 3-4 3V5H1zM8 3h3V1l3 3-3 3"/><path class="tr" d="M0 11h5M2.500 9v4"/><path stroke="#27a" fill="none" d="M7 9l2 2 1-2M9 11v2M13 9h-2v4h2"/></svg></button>
        <button><svg viewBox="0 0 14 14"><path class="sk2" d="M2 2h10v11H2zM5 1h4v2H5zM5 6h5M5 8h5M5 10h3"/><path stroke="#397" d="M1 12h5"/></svg></button>
        <button><svg viewBox="0 0 14 14"><circle cx="7" cy="6" r="6" fill="#3b87c0"/><path class="r" d="M1 3h6v4H1z"/><path fill="#eee" d="M6 6l6 2-3 4z"/></svg></button>
      </div>
    </div>
  </aside>
</div>

<div class="bottom">
  <div class="ltabs"><button class="on">模型</button><button>布局1</button><button>布局2</button><button class="plus">+</button></div>
  <div class="status">
    <div class="sg1"><button class="txt">模型</button><button><svg viewBox="0 0 16 16"><path class="sw" d="M5 2v12M8 2v12M11 2v12M2 5h12M2 8h12M2 11h12"/></svg></button><button><svg viewBox="0 0 16 16"><path d="M3 3.500h11M3 8.500h11M3 13.500h11" stroke="#d4d7db" stroke-width="2" stroke-dasharray="2 2.500"/></svg></button><button class="c"><i class="car"></i></button></div>
    <div class="sg1"><button><svg viewBox="0 0 16 16"><path class="w" d="M1 9h6v5H1z"/><path class="sw" d="M7 9V2h6v4H7"/></svg></button><button class="on"><svg viewBox="0 0 16 16"><path class="w" d="M1 4h6v1H1zM3.500 2h1v5h-1zM6 9h9v4H6z"/></svg></button><button><svg viewBox="0 0 16 16"><path class="sw" d="M2 2v12h12M2 9h4v5"/></svg></button><button class="on"><svg viewBox="0 0 16 16"><path class="sw" stroke-width="1.300" d="M11 4a5.500 5.500 0 102 5M7 9h8M7 9l6-7"/></svg></button><button class="c"><i class="car"></i></button><button><svg viewBox="0 0 16 16"><path class="sr" d="M3 2l5 6 5 6"/><path class="sg" d="M8 1v14"/></svg></button><button class="c"><i class="car"></i></button><button><svg viewBox="0 0 16 16"><path class="sw" d="M12 3L2 13h13M6 9q3 1 3 4"/></svg></button><button class="on"><svg viewBox="0 0 16 16"><path class="sw" stroke-width="1.300" d="M4 3h11v11H4V6M1 1h4v4H1z"/></svg></button><button class="c"><i class="car"></i></button><button><svg viewBox="0 0 16 16"><path class="w" d="M1 3h14v1H1zM1 6h14v2H1zM1 10h14v3H1z"/></svg></button><button class="on"><svg viewBox="0 0 16 16"><path class="sw" stroke-width="1.300" d="M2 2h12v12H2z"/><path d="M4 5h8M6 8h8M4 11h8" stroke="#fff" stroke-width="2.500" stroke-dasharray="2.500 2"/></svg></button><button><svg viewBox="0 0 16 16"><path fill="#7fd09a" d="M6 5h9v9H6z"/><path class="sw" d="M3 1v6M1 3h6"/></svg></button><button><svg viewBox="0 0 16 16"><path class="sw" d="M5 6l3-4h7v6l-3 3H5zM5 6h7v5M12 6l3-4"/><path d="M2 10h4v4H2z" fill="none" stroke="#d8925f"/></svg></button><button class="c"><i class="car"></i></button></div>
    <div class="sg1"><button><svg viewBox="0 0 16 16"><path class="sw" d="M3 15V2M1 4l2-2 2 2M3 12h11M12 10l2 2-2 2M10 3L7 7h4l-3 3"/></svg></button><button><svg viewBox="0 0 16 16"><path class="sw" d="M3 6h8v8H3zM3 6l3-4h8v8l-3 4M11 6l3-4"/><path class="b" d="M2 5h2v2H2zM10 5h2v2h-2zM2 13h2v2H2zM10 13h2v2h-2zM13 1h2v2h-2z"/></svg></button><button class="c"><i class="car"></i></button><button class="on"><svg viewBox="0 0 16 16"><path class="sw" stroke-width="1.300" d="M8 2l6 4v6l-6 3-6-3V6zM8 2v6l6 4M8 8l-6 4"/></svg></button><button class="c"><i class="car"></i></button></div>
    <div class="sg1"><button class="on"><svg viewBox="0 0 16 16"><path class="sw" stroke-width="1.600" d="M8 2v4L2 14M8 6l6 8"/></svg></button><button><svg viewBox="0 0 16 16"><path class="sw" stroke-width="1.500" d="M8 3v4l-5 7M8 7l5 7M11 4l3-2"/></svg></button><button><svg viewBox="0 0 16 16"><path class="sw" stroke-width="1.500" d="M8 3v4l-5 7M8 7l5 7M4 4l8 8"/></svg></button><button class="ratio">1:1</button><button class="c"><i class="car"></i></button><button><svg viewBox="0 0 16 16"><circle cx="8" cy="8" r="4" fill="none" stroke="#d4d7db" stroke-width="3"/><circle cx="8" cy="8" r="6.500" fill="none" stroke="#d4d7db" stroke-width="2" stroke-dasharray="2.500 2.600"/></svg></button><button class="c"><i class="car"></i></button><button><svg viewBox="0 0 16 16"><path class="sw" stroke-width="1.500" d="M8 2v12M2 8h12"/></svg></button></div>
    <div class="sg1"><button><svg viewBox="0 0 16 16"><path class="w" d="M5 2h6v2H8v1h3v2H8v1h3v2H8v1h3v3H5z"/></svg></button><div class="drop unit"><select aria-label="单位"><option>小数</option></select></div><button><svg viewBox="0 0 16 16"><path class="sw" d="M3 2h10v12H3zM5 5h6M5 8h6M5 11h6"/></svg></button><button class="on"><svg viewBox="0 0 16 16"><path class="sw" stroke-width="1.300" d="M8 12H1V2h13v5"/><path fill="#fff" d="M9 9h6v5H9z"/><path class="sw" d="M10 9q2-4 4 0"/></svg></button><button class="c"><i class="car"></i></button></div>
    <div class="sg1"><button><svg viewBox="0 0 16 16"><path class="sw" d="M2 2h5v5H2zM6 9l3 5H3z"/><circle class="sw" cx="12" cy="7" r="2.500"/></svg></button></div>
    <div class="sg1 last"><button class="on"><svg viewBox="0 0 16 16"><circle cx="8" cy="8" r="7" fill="#9cc3ea" stroke="#e8f2fb"/><path stroke="#fff" stroke-width="1.500" d="M8 9l4-4"/></svg></button><button><svg viewBox="0 0 16 16"><path class="sw" d="M2 3h12v10H2zM4 11l3-3M9 8l3-3"/><path class="w" d="M4 9v3h3zM12 7V4H9z"/></svg></button><button><svg viewBox="0 0 16 16"><path class="w" d="M1 3h14v1H1zM1 8h14v1H1zM1 13h14v1H1z"/></svg></button></div>
  </div>
</div>

<div class="taskbar">
  <div class="apps">
    <button><svg viewBox="0 0 20 20"><path fill="#f2f2f2" d="M3 5l6-1v5.500H3zM10 4l7-1v6.500h-7zM3 10.500h6V16l-6-1zM10 10.500h7V17l-7-1z"/></svg></button>
    <button><svg viewBox="0 0 20 20"><circle cx="12" cy="8" r="4.500" fill="none" stroke="#ddd" stroke-width="1.400"/><path stroke="#ddd" stroke-width="1.400" d="M9 11l-6 6"/></svg></button>
    <button class="run"><svg viewBox="0 0 20 20"><path fill="#2fd168" d="M7.500 1.500c4 0 7 2.500 7 5.500s-3 5.500-7 5.500l-4 1.500 1-2.500C2 10.500.5 9 .5 7c0-3 3-5.500 7-5.500z"/><path fill="#ededed" d="M14 7.500c3.500 0 6 2 6 4.500 0 1.500-1 3-2 3.500l.5 2.500-3-1.500c-4 .5-7.500-1.500-7.500-4.500 0-2.500 2.500-4.500 6-4.500z"/><path d="M5 5.500v1M10 5.500v1M12 11v1M16 11v1" stroke="#222"/></svg></button>
    <button class="run on"><svg viewBox="0 0 20 20"><path fill="#f6e9e9" d="M0 0h20v20H0z"/><path fill="#b3242c" fill-rule="evenodd" d="M3 16L8 3h5l4 13h-4l-1-3H8l-2 3zM9 10h3l-1.500-4z"/></svg></button>
    <button class="run"><svg viewBox="0 0 20 20"><rect width="20" height="20" rx="2" fill="#f5f7f2"/><path fill="#8a5a34" d="M8 9l2 2 3-2-2 4 1 5-4 1 1-5z"/><circle cx="10" cy="5" r="3.500" fill="#4b9a50"/><circle cx="5.500" cy="7" r="3" fill="#6aaf60"/><circle cx="14.500" cy="7" r="3.200" fill="#2f7c3b"/></svg></button>
    <button class="run"><svg viewBox="0 0 20 20"><circle cx="10" cy="10" r="9" fill="#dd4b3e"/><path fill="#4aa455" d="M10 10L2 5.500A9 9 0 009 19z"/><path fill="#f8cf45" d="M10 19a9 9 0 008-13h-8z"/><circle cx="10" cy="10" r="4.500" fill="#fff"/><circle cx="10" cy="10" r="3.500" fill="#4583ec"/></svg></button>
    <button class="run"><svg viewBox="0 0 20 20"><circle cx="11" cy="10" r="9" fill="#d35230"/><path fill="#ff8f6b" d="M11 1a9 9 0 019 9h-9z"/><path fill="#b7371b" d="M0 5h10v10H0z"/><path fill="none" stroke="#fff" stroke-width="1.600" d="M4 13V7.500h2.500q1.500 2-.5 3H4"/></svg></button>
  </div>
  <div class="tray">
    <svg viewBox="0 0 16 16"><path class="sw" stroke-width="1.300" d="M3 10l5-5 5 5"/></svg>
    <svg viewBox="0 0 16 16"><rect x="2" y="1" width="12" height="12" rx="3" fill="#2196e8"/><path fill="#fff" d="M8 2l1.300 3L13 5.500 10.500 8l.5 3.500L8 10l-3 1.500L5.500 8 3 5.500 6.700 5z"/><path fill="#2196e8" d="M6 12h4l-2 3z"/></svg>
    <svg viewBox="0 0 16 16"><path class="w" d="M1 3h4v4H1z"/><path class="sw" d="M3.500 7v4.500h11v-6H6"/><path class="w" d="M6 7h7v3H6z"/></svg>
    <svg viewBox="0 0 16 16"><path class="sw" d="M2 14Q3 3 14 3M5 14q1-8 9-8M8 14q1-5 6-5M11 14q0-2 3-2"/></svg>
    <svg viewBox="0 0 16 16"><path class="sw" d="M2 6h2l4-4v12l-4-4H2zM10 6q1 2 0 4M12 4q2 4 0 8M14 2q3 6 0 12"/></svg>
    <span class="ime">英</span>
    <div class="clock">10:28<br>2020/12/24</div>
    <button class="notif" aria-label="通知"><svg viewBox="0 0 16 16"><path class="sw" stroke-width="1.200" d="M2 2h12v10h-4v3l-3-3H2z"/></svg></button>
    <i class="edge"></i>
  </div>
</div>

<svg class="mark" width="288" height="144" viewBox="0 0 288 144" aria-hidden="true">
  <g fill="#c2c4c5"><text class="bai" x="1" y="89">Bai</text><text class="jy" x="187" y="85">经验</text>
  <ellipse cx="131" cy="16" rx="10" ry="14"/><ellipse cx="156" cy="18" rx="10.500" ry="13" transform="rotate(8 156 18)"/><ellipse cx="111" cy="36" rx="10.500" ry="13.500" transform="rotate(-6 111 36)"/><ellipse cx="172" cy="43" rx="10.500" ry="13" transform="rotate(5 172 43)"/>
  <path d="M141 38c8 0 14 5 18 13 4 7 18 15 18 27 0 9-7 14-15 14-9 0-13-2-20-2s-12 1-19 1c-9 0-17-5-17-14 0-11 12-19 17-26 5-8 10-13 18-13z"/></g>
  <text class="du" x="141" y="83">du</text>
  <text class="url" x="5" y="127">jingyan.baidu.com</text>
</svg>
</body>
</html>
```
FILE: styles.css
```css
* { box-sizing: border-box; }
body {
  margin: 0;
  height: 100vh;
  display: flex;
  flex-direction: column;
  position: relative;
  overflow: hidden;
  background: #222933;
  color: #d9dbde;
  font: 10px/14px "Noto Sans", "Noto Sans CJK SC", sans-serif;
}
button, input, select { font: inherit; color: inherit; background: none; border: 0; padding: 0; margin: 0; }
button { display: flex; align-items: center; justify-content: center; white-space: nowrap; }
svg { flex: none; display: block; }
a { color: inherit; text-decoration: none; }

/* icon paints */
.w { fill: #dadada; }
.b { fill: #86c8f7; }
.y { fill: #f3cf6b; }
.r { fill: #e0353b; }
.g { fill: #4fc06d; }
.k { fill: #222933; }
.sw { fill: none; stroke: #d4d7db; }
.sb { fill: none; stroke: #86c8f7; }
.sy { fill: none; stroke: #f3cf6b; }
.sr { fill: none; stroke: #e2606a; }
.sg { fill: none; stroke: #58bf7c; }
.sk { fill: none; stroke: #7d672c; stroke-width: .8; }
.sk2 { fill: none; stroke: #23282c; }
.tr { fill: none; stroke: #d8232a; stroke-width: 1.5; }
.yb { fill: #f0c02c; stroke: #6b3a12; }
.yk { fill: #e9dd7a; stroke: #222; }

.ib { width: 20px; height: 20px; flex: none; }
.ib svg { width: 14px; height: 14px; }
.ribbon .ib svg { width: 16px; height: 16px; }
.dim { opacity: .35; }
.car { flex: none; width: 4px; height: 3px; background: #c9ccd0; clip-path: polygon(0 0, 100% 0, 50% 100%); }
.car.big { width: 6px; height: 4px; }

/* title bar */
.top { display: flex; height: 38px; flex: none; }
.app { width: 33px; height: 33px; margin: 1px 0 0 1px; background: linear-gradient(#c9c9c9, #8b8b8b); flex: none; }
.topcol { flex: 1; display: flex; flex-direction: column; min-width: 0; }
.titlebar { display: flex; align-items: center; height: 19px; }
.qat { display: flex; align-items: center; padding-left: 4px; }
.qat .car { margin: 0 3px; }
.drop { display: flex; align-items: center; background: #4b566b; height: 17px; position: relative; }
.drop svg { width: 14px; height: 14px; margin-left: 2px; }
.drop select { flex: 1; appearance: none; min-width: 0; height: 15px; padding-left: 2px; outline: 0; }
.drop::after { content: ""; width: 6px; height: 4px; margin-right: 3px; background: #d0d3d8; clip-path: polygon(0 0, 100% 0, 50% 100%); }
.ws { width: 148px; margin-left: 1px; background: #353d4e; }
.qat .car.big { margin: 0 5px; }
.title { flex: 1; display: flex; justify-content: center; gap: 14px; font-family: Roboto, sans-serif; font-size: 11px; color: #d2d4d7; white-space: nowrap; }
.info { display: flex; align-items: center; }
.tri { width: 6px; height: 8px; margin-right: 4px; }
.search { width: 148px; height: 17px; background: #454c61; padding-left: 3px; font-style: italic; }
.search::placeholder { color: #b3b7c0; opacity: 1; }
.login { height: 18px; gap: 3px; padding-left: 4px; }
.login svg { width: 14px; height: 14px; }
.far { margin: 0 6px 0 52px; }
.info .ib + .car { margin: 0 8px 0 1px; }
.vline { width: 1px; height: 14px; background: #4c535e; margin-right: 4px; }
.win { display: flex; gap: 1px; margin-left: 47px; }

.tabrow { display: flex; height: 19px; align-items: flex-end; padding-left: 4px; }
.tabs { display: flex; justify-content: space-between; width: 576px; }
.tabs a { padding: 1px 8px 0; height: 16px; line-height: 15px; color: #a9adb3; white-space: nowrap; }
.tabs a.on { background: #3b4453; color: #e6e8ea; padding: 1px 10px 0 8px; }
.mini { height: 16px; margin-left: 18px; }

/* ribbon */
.ribbon { display: flex; padding-left: 2px; height: 80px; flex: none; }
.panel { background: #3b4453; border-right: 1px solid #2a313c; display: flex; flex-direction: column; flex: none; }
.p1 { width: 166px; } .p2 { width: 57px; } .p3 { width: 114px; } .p4 { width: 79px; }
.p5 { width: 120px; } .p6 { width: 51px; } .p7 { width: 121px; } .p8 { width: 171px; }
.p9 { width: 142px; } .p10 { width: 210px; } .p11 { width: 57px; } .p12 { width: 50px; }
.body { display: flex; height: 63px; padding-top: 3px; align-items: flex-start; }
.panel footer { height: 17px; display: flex; align-items: center; justify-content: center; gap: 6px; padding-top: 3px; position: relative; }
.corner { width: 5px; height: 5px; border: solid #c3c6ca; border-width: 0 1px 1px 0; background: linear-gradient(45deg, transparent 40%, #c3c6ca 40% 60%, transparent 60%); }
.p2 .corner, .p7 .corner { position: absolute; right: 4px; bottom: 4px; }
.panel.p2 footer, .panel.p7 footer { padding-right: 10px; }
.panel.p6 footer, .panel.p12 footer { gap: 4px; }
.bigb { flex-direction: column; justify-content: flex-start; padding-top: 2px; height: 60px; flex: none; }
.bigb svg { width: 28px; height: 28px; margin-bottom: 2px; }
.bigb .car { margin-top: 2px; }
.w32 { width: 32px; } .w34 { width: 34px; } .w42 { width: 42px; } .w44 { width: 44px; }
.w50 { width: 50px; } .w60 { width: 60px; }
.p1 .body { padding-left: 4px; }
.stack { display: flex; flex-direction: column; align-items: flex-start; }
.stack.wide { flex: 1; align-items: stretch; min-width: 0; }
.tb { height: 20px; gap: 3px; justify-content: flex-start; padding-left: 2px; }
.tb svg { width: 14px; height: 14px; }
.tb .car { margin-left: 4px; }
.tt { justify-content: flex-start; }
.tt .car { margin-left: 7px; }
.grid { display: grid; grid-auto-rows: 20px; align-items: center; }
.g3 { grid-template-columns: 23px 21px 20px auto; padding-left: 2px; }
.g4 { grid-template-columns: 20px 24px 22px 12px; padding-left: 2px; }
.g5 { grid-template-columns: 24px 20px 24px 20px 23px 8px; }
.g7 { grid-template-columns: 20px 12px 23px 21px 20px 20px; padding-left: 3px; }
.span4 { grid-column: 3 / span 4; width: 83px; }
.p8 .body { padding: 3px 2px 0; }
.p8 .drop { margin: 1px 0 2px; }
.p8 .tb { padding-left: 2px; }
.sel { background: #47607b; border: 1px solid #69a5d3; padding-top: 1px; margin-left: 1px; }
.low { margin-top: 46px; }
.p10 .stack { padding-right: 2px; }
.lay { margin: 1px 0 2px; }
.lay svg { margin-left: 2px; }
.lay select { padding-left: 4px; }
.row { display: flex; }
.row .tb { padding-left: 3px; }
.ib.on { border: 1px solid #69a5d3; background: #3f5f7d; }

/* drawing tabs */
.files { display: flex; align-items: flex-end; height: 26px; padding-left: 16px; border-bottom: 3px solid #3b4453; flex: none; }
.ftab { height: 19px; width: 105px; padding: 0 12px 0 10px; justify-content: space-between; background: #2b323e; border-radius: 6px 8px 0 0; }
.ftab.on { background: #3b4453; width: 103px; padding-left: 8px; color: #e4e6e8; }
.fplus { width: 20px; height: 13px; margin: 0 0 2px 4px; background: #2d3440; border-radius: 3px; }

/* work area */
.work { flex: 1; display: flex; min-height: 0; }
.canvas { flex: 1; position: relative; background: #212830; min-width: 0; }
.vlabel { padding: 4px 3px; color: #d5d8da; }
.drawing { position: absolute; left: 0; top: 0; }
.note { font: 22px "Noto Sans CJK SC", sans-serif; fill: #dd2a33; stroke: #fbe9ea; stroke-width: 3px; paint-order: stroke; stroke-linejoin: round; }
.mdi { position: absolute; top: 3px; right: 5px; display: flex; }
.mdi .ib { width: 17px; }
.cube { position: absolute; right: 12px; top: 26px; display: flex; flex-direction: column; align-items: center; }
.dir { font: 16px "Noto Sans CJK SC", sans-serif; fill: #a0a4a8; text-anchor: middle; }
.up { font: 24px "Noto Sans CJK SC", sans-serif; fill: #4d555c; text-anchor: middle; }
.pill { width: 48px; height: 15px; margin-top: 11px; background: #8c9098; border: 1px solid #a0a4aa; border-radius: 3px; color: #62666e; gap: 3px; }
.pill span { font-size: 8px; }
.navbar { position: absolute; right: 3px; top: 197px; background: #53585d; border-radius: 3px; }
.cmd { position: absolute; left: 311px; right: 311px; bottom: 0; }
.hist { display: flex; flex-direction: column; align-items: flex-start; gap: 4px; padding: 0 0 3px 51px; font: 10px/13px "Liberation Mono", "Noto Sans CJK SC", monospace; }
.hist span { background: #54585c; padding: 0 2px; color: #eceeef; height: 13px; white-space: pre; }
.hist .old { color: #b9bcbf; background: #4d5257; }
.cmdrow { display: flex; height: 21px; }
.cmdtools { display: flex; align-items: center; width: 46px; gap: 3px; padding-left: 2px; background: #272e38; }
.dots { width: 5px; height: 15px; background: repeating-linear-gradient(#a4a8ad 0 1px, transparent 1px 3px); }
.cmdtools button:last-child { margin-left: 4px; }
.cmdin { flex: 1; display: flex; align-items: center; gap: 6px; background: #bdbebf; padding: 0 0 2px 3px; }
.cmdin input { flex: 1; font-size: 11px; font-style: italic; height: 19px; color: #333; outline: 0; }
.cmdin input::placeholder { color: #5b5e62; opacity: 1; }

/* docked toolbars */
.docks { width: 50px; display: flex; gap: 2px; padding-left: 2px; background: #3b4453; overflow: hidden; }
.dcol { width: 22px; display: flex; flex-direction: column; }
.dock { display: flex; flex-direction: column; align-items: center; gap: 4px; padding: 2px 0 1px; border: 1px solid #2b323d; border-width: 0 1px 1px; }
.dock.cut { padding-top: 3px; }
.grip { width: 12px; height: 4px; background: repeating-linear-gradient(90deg, #a1a7b0 0 1px, transparent 1px 3px); }
.dock button { width: 14px; height: 14px; background: #e4e4da; flex: none; }
.dock svg { width: 14px; height: 14px; }
.sep { width: 16px; height: 2px; background: #d3d6da; flex: none; }

/* layout tabs and status bar */
.bottom { display: flex; height: 25px; border-top: 1px solid #3b4453; flex: none; }
.ltabs { display: flex; align-items: flex-start; padding-left: 8px; gap: 1px; flex: 1; }
.ltabs button { height: 15px; padding: 0 9px; background: #2c3441; border-radius: 0 0 7px 7px; color: #b9bdc3; }
.ltabs .on { background: #3b4656; color: #fff; font-weight: 700; padding: 0 10px; }
.ltabs .plus { padding: 0 6px; font-size: 12px; }
.status { display: flex; gap: 4px; padding: 1px 2px 0 0; align-items: flex-start; }
.sg1 { display: flex; gap: 1px; background: #303845; }
.sg1 button { width: 20px; height: 19px; background: #343d4b; }
.sg1.last { margin-left: -1px; }
.sg1 svg { width: 16px; height: 16px; }
.sg1 .txt { width: 24px; color: #e6e8ea; }
.sg1 .c { width: 10px; }
.sg1 .ratio { width: 15px; }
.sg1 .on { background: #5887bd; }
.unit { width: 57px; height: 19px; background: #343d4b; }
.c .car { width: 6px; height: 4px; }

/* taskbar */
.taskbar { display: flex; justify-content: space-between; height: 33px; background: #080808; flex: none; }
.apps { display: flex; }
.apps button { width: 41px; height: 32px; }
.apps svg { width: 20px; height: 20px; }
.apps .run { height: 33px; background: linear-gradient(#b9754f, #b9754f) center bottom / 33px 2px no-repeat; }
.apps .on { background: linear-gradient(#c67d55, #c67d55) center bottom / 41px 2px no-repeat, #3c3c3c; }
.tray { display: flex; align-items: center; gap: 4px; }
.tray svg { width: 16px; height: 16px; }
.ime { font-size: 12px; margin-left: 2px; }
.clock { text-align: center; line-height: 16px; margin-left: 2px; color: #e4e4e4; }
.notif { margin: 0 12px 0 9px; }
.edge { width: 1px; align-self: stretch; background: #444; margin-right: 2px; }

/* watermark over the lower right corner */
.mark { position: absolute; right: 86px; bottom: 28px; pointer-events: none; }
.bai { font: 700 61px "Liberation Sans", sans-serif; stroke: #c2c4c5; stroke-width: 2px; }
.jy { font: 900 46px "Noto Sans CJK SC", sans-serif; stroke: #c2c4c5; stroke-width: 1px; }
.du { font: 700 42px "Liberation Sans", sans-serif; fill: #212830; text-anchor: middle; }
.url { font: 32px "Noto Sans", sans-serif; fill: #d6d8da; stroke: #d6d8da; stroke-width: 1px; opacity: .92; }
```
